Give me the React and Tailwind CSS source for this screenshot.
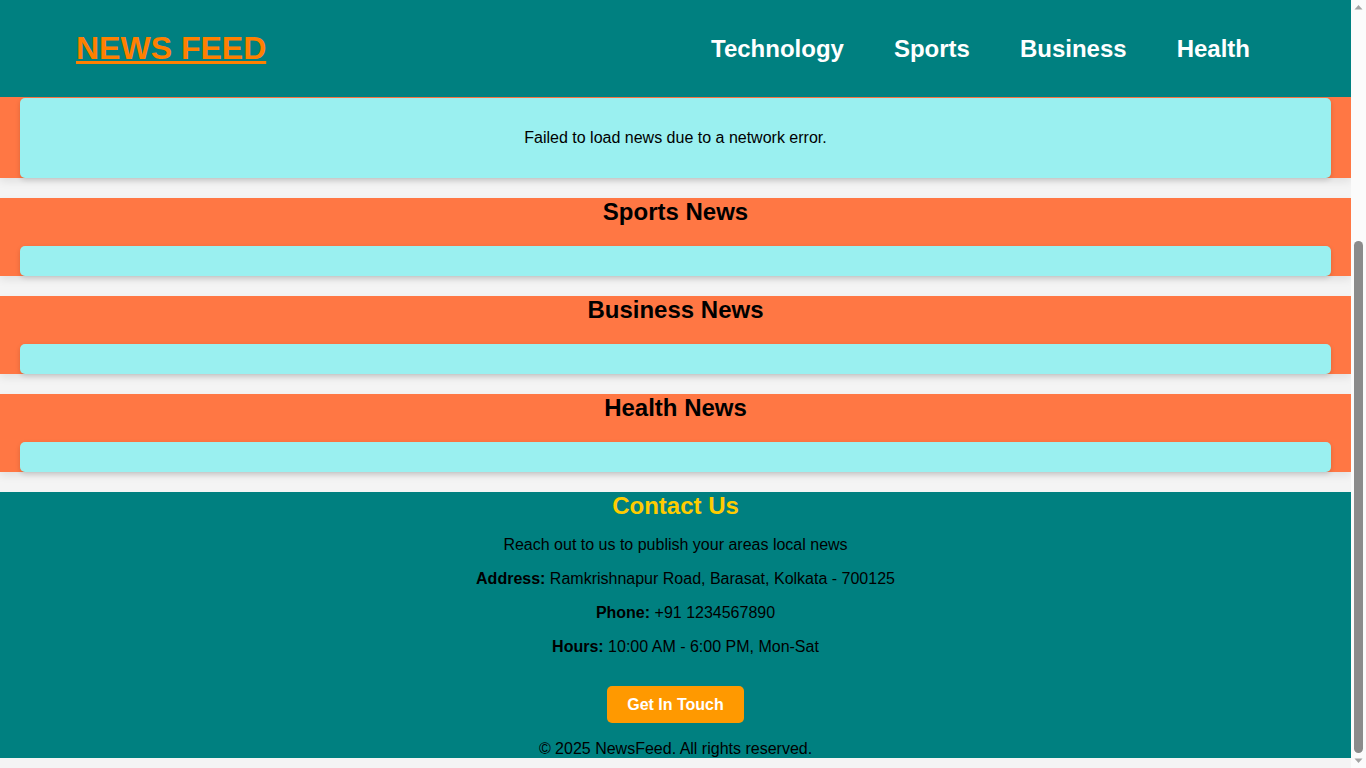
import { useLayoutEffect, useRef } from "react";

const navLinks = ["Technology", "Sports", "Business", "Health"];

function NewsSection({ title, children }) {
  return (
    <section className="mb-5 bg-[#ff7744] px-5 shadow-[0_4px_8px_rgba(0,0,0,0.08)]">
      <h2 className="mb-5 text-center text-2xl font-bold leading-[28px] text-black">{title}</h2>
      <div className="rounded-[5px] bg-[#9af0f0] p-[15px] shadow-[0_2px_5px_rgba(0,0,0,0.15)]">
        {children}
      </div>
    </section>
  );
}

function Scrollbar() {
  return (
    <div className="flex w-[15px] shrink-0 flex-col items-center bg-[#fbfbfb]">
      <svg width="15" height="15" viewBox="0 0 15 15" className="shrink-0">
        <path d="M3.5 9.5 L7.5 5 L11.5 9.5 Z" fill="#a3a3a3" />
      </svg>
      <div className="flex w-full flex-1 flex-col justify-end px-[3px]">
        <div className="h-[512px] rounded-full bg-[#8b8b8b]" />
      </div>
      <svg width="15" height="15" viewBox="0 0 15 15" className="shrink-0">
        <path d="M3.5 5.5 L7.5 10 L11.5 5.5 Z" fill="#a3a3a3" />
      </svg>
    </div>
  );
}

export default function App() {
  const scroller = useRef(null);

  // the page in the reference is scrolled to the very bottom
  useLayoutEffect(() => {
    const el = scroller.current;
    if (el) el.scrollTop = el.scrollHeight;
  }, []);

  return (
    <div className="flex h-screen bg-[#f4f4f4] font-['Liberation_Sans',Arial,sans-serif] text-black">
      <div
        ref={scroller}
        className="flex-1 overflow-y-auto [scrollbar-width:none] [&::-webkit-scrollbar]:hidden"
      >
        <header className="sticky top-0 z-10 flex h-[97px] items-center justify-between bg-[#008080] pl-[76px] pr-[101px]">
          <a href="#" className="text-[32px] font-bold leading-[37px] text-[#ff8000] underline">
            NEWS FEED
          </a>
          <nav className="flex gap-[50px]">
            {navLinks.map((link) => (
              <a key={link} href="#" className="text-2xl font-bold text-white">
                {link}
              </a>
            ))}
          </nav>
        </header>

        <main>
          <NewsSection title="Technology News">
            <p className="my-4 text-center text-base leading-[18px]">
              Failed to load news due to a network error.
            </p>
          </NewsSection>
          <NewsSection title="Sports News" />
          <NewsSection title="Business News" />
          <NewsSection title="Health News" />
        </main>

        <footer className="mb-[10px] bg-[#008080] text-center">
          <h2 className="text-2xl font-bold leading-[28px] text-[#ffcc00]">Contact Us</h2>
          <p className="mt-4 text-base leading-[18px]">Reach out to us to publish your areas local news</p>
          <p className="mt-4 pl-5 text-base leading-[18px]">
            <strong>Address:</strong> Ramkrishnapur Road, Barasat, Kolkata - 700125
          </p>
          <p className="mt-4 pl-5 text-base leading-[18px]">
            <strong>Phone:</strong> +91 1234567890
          </p>
          <p className="mt-4 pl-5 text-base leading-[18px]">
            <strong>Hours:</strong> 10:00 AM - 6:00 PM, Mon-Sat
          </p>
          <button className="mt-[30px] rounded-[5px] bg-[#ff9900] px-5 py-[10px] text-base font-bold leading-[17px] text-white">
            Get In Touch
          </button>
          <p className="mt-[17px] text-base leading-[18px]">© 2025 NewsFeed. All rights reserved.</p>
        </footer>
      </div>
      <Scrollbar />
    </div>
  );
}
